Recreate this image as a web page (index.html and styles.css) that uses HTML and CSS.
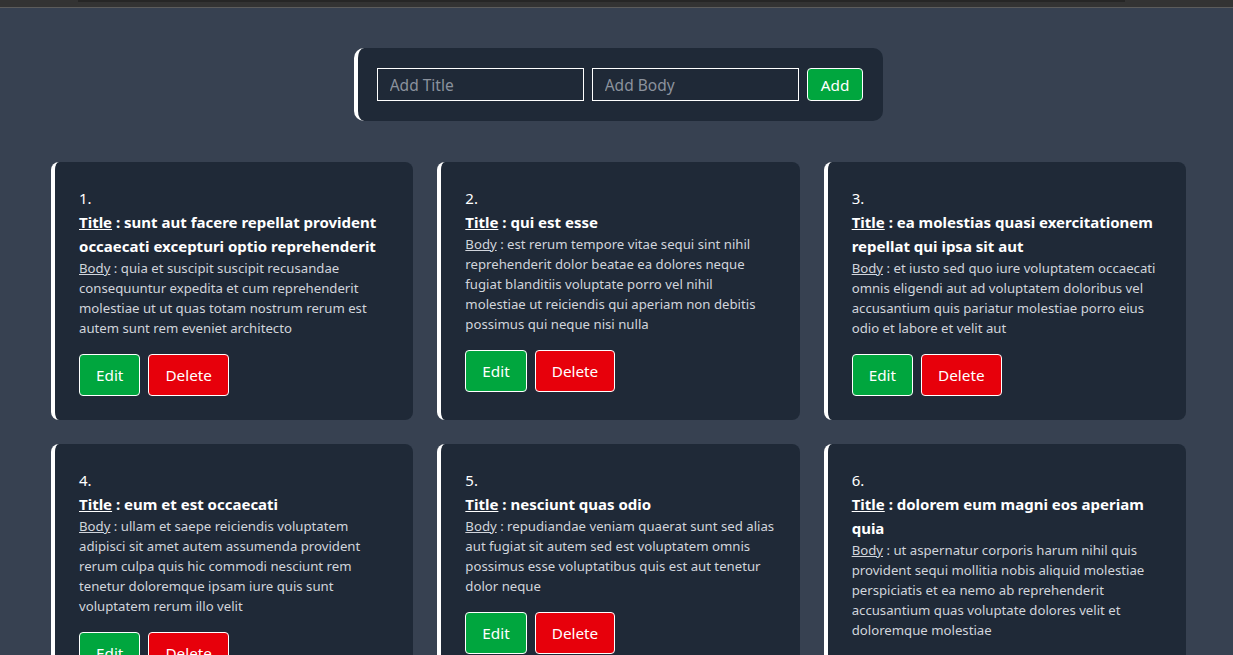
FILE: index.html
```html
<!DOCTYPE html>
<html lang="en">
<head>
<meta charset="utf-8">
<title>Posts</title>
<link rel="stylesheet" href="styles.css">
</head>
<body>
<div class="topbar"><div class="topbar-thumb"></div></div>
<main class="page">
  <form class="add-form">
    <input class="field" type="text" placeholder="Add Title">
    <input class="field" type="text" placeholder="Add Body">
    <button class="btn btn-green btn-add" type="button">Add</button>
  </form>
  <section class="grid">
    <article class="card">
      <div class="num">1.</div>
      <h2 class="title"><u>Title</u> : sunt aut facere repellat provident occaecati excepturi optio reprehenderit</h2>
      <p class="body"><u>Body</u> : quia et suscipit suscipit recusandae consequuntur expedita et cum reprehenderit molestiae ut ut quas totam nostrum rerum est autem sunt rem eveniet architecto</p>
      <div class="actions"><button class="btn btn-green">Edit</button><button class="btn btn-red">Delete</button></div>
    </article>
    <article class="card">
      <div class="num">2.</div>
      <h2 class="title"><u>Title</u> : qui est esse</h2>
      <p class="body"><u>Body</u> : est rerum tempore vitae sequi sint nihil reprehenderit dolor beatae ea dolores neque fugiat blanditiis voluptate porro vel nihil<br>molestiae ut reiciendis qui aperiam non debitis possimus qui neque nisi nulla</p>
      <div class="actions"><button class="btn btn-green">Edit</button><button class="btn btn-red">Delete</button></div>
    </article>
    <article class="card">
      <div class="num">3.</div>
      <h2 class="title"><u>Title</u> : ea molestias quasi exercitationem repellat qui ipsa sit aut</h2>
      <p class="body"><u>Body</u> : et iusto sed quo iure voluptatem occaecati omnis eligendi aut ad voluptatem doloribus vel accusantium quis pariatur molestiae porro eius odio et labore et velit aut</p>
      <div class="actions"><button class="btn btn-green">Edit</button><button class="btn btn-red">Delete</button></div>
    </article>
    <article class="card">
      <div class="num">4.</div>
      <h2 class="title"><u>Title</u> : eum et est occaecati</h2>
      <p class="body"><u>Body</u> : ullam et saepe reiciendis voluptatem adipisci sit amet autem assumenda provident rerum culpa quis hic commodi nesciunt rem tenetur doloremque ipsam iure quis sunt voluptatem rerum illo velit</p>
      <div class="actions"><button class="btn btn-green">Edit</button><button class="btn btn-red">Delete</button></div>
    </article>
    <article class="card">
      <div class="num">5.</div>
      <h2 class="title"><u>Title</u> : nesciunt quas odio</h2>
      <p class="body"><u>Body</u> : repudiandae veniam quaerat sunt sed alias aut fugiat sit autem sed est voluptatem omnis possimus esse voluptatibus quis est aut tenetur dolor neque</p>
      <div class="actions"><button class="btn btn-green">Edit</button><button class="btn btn-red">Delete</button></div>
    </article>
    <article class="card">
      <div class="num">6.</div>
      <h2 class="title"><u>Title</u> : dolorem eum magni eos aperiam quia</h2>
      <p class="body"><u>Body</u> : ut aspernatur corporis harum nihil quis provident sequi mollitia nobis aliquid molestiae perspiciatis et ea nemo ab reprehenderit accusantium quas voluptate dolores velit et doloremque molestiae</p>
      <div class="actions"><button class="btn btn-green">Edit</button><button class="btn btn-red">Delete</button></div>
    </article>
  </section>
</main>
</body>
</html>
```

FILE: styles.css
```css
* { box-sizing: border-box; }
html, body { margin: 0; padding: 0; }
body {
  background: #374151;
  font-family: "Noto Sans", "Open Sans", sans-serif;
  color: #ffffff;
  overflow: hidden;
}
.topbar {
  height: 8px;
  background: #333333;
  border-bottom: 1px solid #5c5c5c;
  padding: 0 108px 0 78px;
}
.topbar-thumb {
  height: 2px;
  background: #262626;
}
.page {
  display: flex;
  flex-direction: column;
  align-items: center;
  padding-top: 40px;
}
.add-form {
  display: flex;
  align-items: center;
  gap: 8px;
  margin-left: 4px;
  padding: 20px 20px 20px 19px;
  background: #1f2937;
  border-left: 4px solid #ffffff;
  border-radius: 10px;
}
.field {
  width: 207px;
  height: 33px;
  background: transparent;
  border: 1px solid #ffffff;
  color: #ffffff;
  font-family: inherit;
  font-size: 15.5px;
  padding: 0 12px;
  outline: none;
}
.field::placeholder { color: #8b929d; }
.btn {
  font-family: inherit;
  font-size: 15.3px;
  color: #ffffff;
  border: 1px solid #ffffff;
  border-radius: 4px;
  cursor: pointer;
  height: 42px;
  padding: 0 16px;
}
.btn-green { background: #00a63e; }
.btn-red { background: #e7000b; }
.btn-add { height: 33px; padding: 0 13px; }
.grid {
  align-self: stretch;
  display: grid;
  grid-template-columns: repeat(3, 1fr);
  gap: 24px;
  padding: 41px 47px 0 51px;
}
.card {
  background: #1f2937;
  border-left: 4px solid #ffffff;
  border-radius: 8px;
  padding: 24px 23px 24px 24px;
}
.num {
  font-size: 15px;
  line-height: 24px;
}
.title {
  margin: 0;
  font-size: 15px;
  font-weight: 700;
  line-height: 24px;
}
.body {
  margin: 0;
  font-size: 13.2px;
  line-height: 20px;
  color: #d1d5dc;
}
.actions {
  display: flex;
  gap: 8px;
  margin-top: 16px;
}
```
